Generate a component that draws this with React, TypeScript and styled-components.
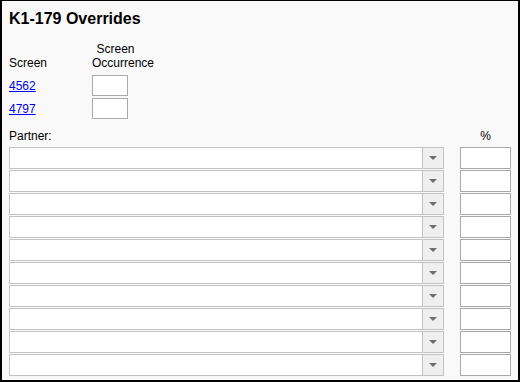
import React from "react";
import styled, { createGlobalStyle } from "styled-components";

const Global = createGlobalStyle`
  html, body { margin: 0; padding: 0; background: #000; }
  body { font-family: "Liberation Sans", Arial, sans-serif; }
`;

const Frame = styled.div`
  box-sizing: border-box;
  width: 520px;
  height: 382px;
  border-style: solid;
  border-color: #000;
  border-width: 1px 2px 2px 2px;
  background: #f9f9f9;
  padding: 8px 7px 0 7px;
  color: #000;
`;

const Title = styled.h1`
  margin: 0;
  font-size: 16px;
  font-weight: bold;
  line-height: 19px;
`;

const ScreenTable = styled.div`
  display: grid;
  grid-template-columns: 83px 60px;
  row-gap: 2px;
  margin-top: 14px;
  font-size: 12px;
`;

const HeadLabel = styled.div`
  align-self: end;
  line-height: 14px;
  text-align: left;
  margin-bottom: 3px;
`;

const Indent = styled.span`
  padding-left: 4.5px;
`;

const ScreenLink = styled.a`
  color: #0000ee;
  text-decoration: underline;
  align-self: center;
  line-height: 14px;
`;

const SmallBox = styled.div`
  box-sizing: border-box;
  width: 36px;
  height: 21px;
  background: #fff;
  border: 1px solid #a9a9a9;
`;

const PartnerHead = styled.div`
  display: flex;
  justify-content: space-between;
  margin-top: 10px;
  font-size: 12px;
  line-height: 14px;
  margin-bottom: 4px;
`;

const Pct = styled.span`
  width: 51px;
  text-align: center;
`;

const Rows = styled.div`
  display: flex;
  flex-direction: column;
  gap: 1px;
`;

const Row = styled.div`
  display: flex;
  justify-content: space-between;
`;

const Select = styled.div`
  box-sizing: border-box;
  width: 435px;
  height: 22px;
  display: flex;
  background: #fff;
  border: 1px solid #c2c2c2;
`;

const SelectField = styled.div`
  flex: 1;
`;

const DropButton = styled.div`
  width: 20px;
  display: flex;
  align-items: center;
  justify-content: center;
  background: #efefef;
  border-left: 1px solid #c2c2c2;
`;

const Arrow = styled.span`
  width: 0;
  height: 0;
  border-left: 4px solid transparent;
  border-right: 4px solid transparent;
  border-top: 4px solid #6e6e6e;
`;

const PctBox = styled.div`
  box-sizing: border-box;
  width: 51px;
  height: 22px;
  background: #fff;
  border: 1px solid #a9a9a9;
`;

const screens = ["4562", "4797"];

export default function App() {
  return (
    <>
      <Global />
      <Frame>
        <Title>K1-179 Overrides</Title>
        <ScreenTable>
          <HeadLabel>Screen</HeadLabel>
          <HeadLabel>
            <Indent>Screen</Indent>
            <br />
            Occurrence
          </HeadLabel>
          {screens.map((s) => (
            <React.Fragment key={s}>
              <ScreenLink href="#">{s}</ScreenLink>
              <SmallBox />
            </React.Fragment>
          ))}
        </ScreenTable>
        <PartnerHead>
          <span>Partner:</span>
          <Pct>%</Pct>
        </PartnerHead>
        <Rows>
          {Array.from({ length: 10 }).map((_, i) => (
            <Row key={i}>
              <Select>
                <SelectField />
                <DropButton>
                  <Arrow />
                </DropButton>
              </Select>
              <PctBox />
            </Row>
          ))}
        </Rows>
      </Frame>
    </>
  );
}
